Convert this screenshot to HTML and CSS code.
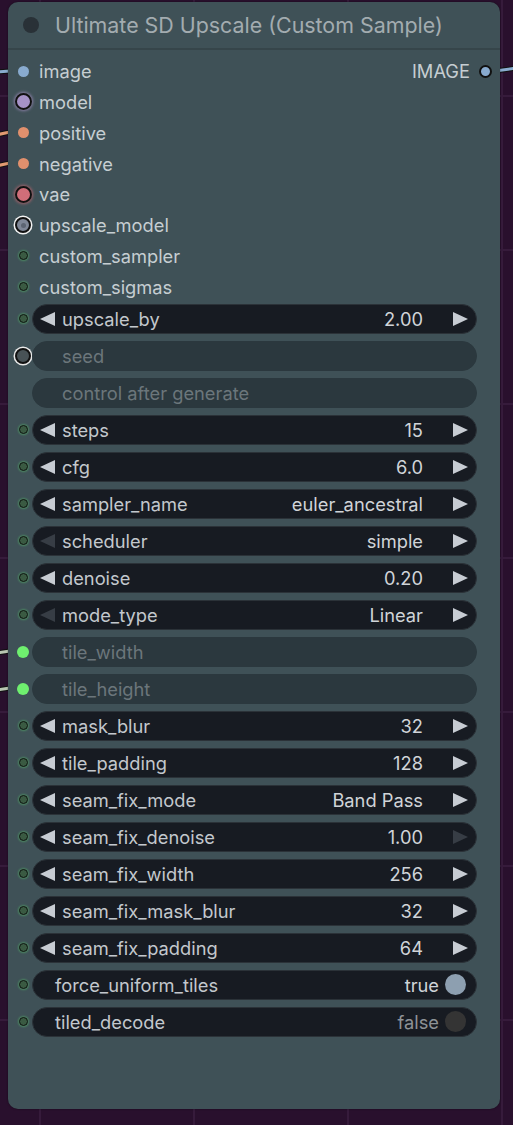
FILE: index.html
```html
<!DOCTYPE html>
<html>
<head>
<meta charset="utf-8">
<link rel="stylesheet" href="styles.css">
</head>
<body>
<svg class="links" width="513" height="1125" viewBox="0 0 513 1125">
  <g fill="none" stroke-linecap="round">
    <path d="M-4 72 L10 71" stroke="#111" stroke-width="5"/>
    <path d="M-4 72 L10 71" stroke="#8aaccf" stroke-width="3"/>
    <path d="M-4 135 L10 132" stroke="#111" stroke-width="5"/>
    <path d="M-4 135 L10 132" stroke="#e39a72" stroke-width="3"/>
    <path d="M-4 166 L10 163" stroke="#111" stroke-width="5"/>
    <path d="M-4 166 L10 163" stroke="#e39a72" stroke-width="3"/>
    <path d="M-4 653 L10 651" stroke="#111" stroke-width="5"/>
    <path d="M-4 653 L10 651" stroke="#b9c6b2" stroke-width="3"/>
    <path d="M-4 690 L10 688" stroke="#111" stroke-width="5"/>
    <path d="M-4 690 L10 688" stroke="#b9c6b2" stroke-width="3"/>
    <path d="M495 71 L517 68" stroke="#111" stroke-width="5"/>
    <path d="M495 71 L517 68" stroke="#8aaccf" stroke-width="3"/>
  </g>
</svg>
<div class="node">
  <div class="title"><span class="title-dot"></span><span class="title-text">Ultimate SD Upscale (Custom Sample)</span></div>
  <div class="io">
    <div class="row"><span class="slot"><span class="dot d-image"></span></span><span class="label">image</span>
      <span class="out"><span class="out-label">IMAGE</span><span class="dot d-out"></span></span></div>
    <div class="row"><span class="slot"><span class="dot d-model"></span></span><span class="label">model</span></div>
    <div class="row"><span class="slot"><span class="dot d-cond"></span></span><span class="label">positive</span></div>
    <div class="row"><span class="slot"><span class="dot d-cond"></span></span><span class="label">negative</span></div>
    <div class="row"><span class="slot"><span class="dot d-vae"></span></span><span class="label">vae</span></div>
    <div class="row"><span class="slot"><span class="dot d-up"><span class="d-up-in"></span></span></span><span class="label">upscale_model</span></div>
    <div class="row"><span class="slot"><span class="dot d-small"></span></span><span class="label">custom_sampler</span></div>
    <div class="row"><span class="slot"><span class="dot d-small"></span></span><span class="label">custom_sigmas</span></div>
  </div>
  <div class="widgets">
    <div class="wrow"><span class="slot"><span class="dot d-small"></span></span><div class="widget"><span class="al"></span><span class="wl">upscale_by</span><span class="wv">2.00</span><span class="ar"></span></div></div>
    <div class="wrow"><span class="slot"><span class="dot d-seed"></span></span><div class="widget off"><span class="wl">seed</span></div></div>
    <div class="wrow"><span class="slot"></span><div class="widget off"><span class="wl">control after generate</span></div></div>
    <div class="wrow"><span class="slot"><span class="dot d-small"></span></span><div class="widget"><span class="al"></span><span class="wl">steps</span><span class="wv">15</span><span class="ar"></span></div></div>
    <div class="wrow"><span class="slot"><span class="dot d-small"></span></span><div class="widget"><span class="al"></span><span class="wl">cfg</span><span class="wv">6.0</span><span class="ar"></span></div></div>
    <div class="wrow"><span class="slot"><span class="dot d-small"></span></span><div class="widget"><span class="al"></span><span class="wl">sampler_name</span><span class="wv">euler_ancestral</span><span class="ar"></span></div></div>
    <div class="wrow"><span class="slot"><span class="dot d-small"></span></span><div class="widget"><span class="al dim"></span><span class="wl">scheduler</span><span class="wv">simple</span><span class="ar"></span></div></div>
    <div class="wrow"><span class="slot"><span class="dot d-small"></span></span><div class="widget"><span class="al"></span><span class="wl">denoise</span><span class="wv">0.20</span><span class="ar"></span></div></div>
    <div class="wrow"><span class="slot"><span class="dot d-small"></span></span><div class="widget"><span class="al dim"></span><span class="wl">mode_type</span><span class="wv">Linear</span><span class="ar"></span></div></div>
    <div class="wrow"><span class="slot"><span class="dot d-int"></span></span><div class="widget off"><span class="wl">tile_width</span></div></div>
    <div class="wrow"><span class="slot"><span class="dot d-int"></span></span><div class="widget off"><span class="wl">tile_height</span></div></div>
    <div class="wrow"><span class="slot"><span class="dot d-small"></span></span><div class="widget"><span class="al"></span><span class="wl">mask_blur</span><span class="wv">32</span><span class="ar"></span></div></div>
    <div class="wrow"><span class="slot"><span class="dot d-small"></span></span><div class="widget"><span class="al"></span><span class="wl">tile_padding</span><span class="wv">128</span><span class="ar"></span></div></div>
    <div class="wrow"><span class="slot"><span class="dot d-small"></span></span><div class="widget"><span class="al"></span><span class="wl">seam_fix_mode</span><span class="wv">Band Pass</span><span class="ar"></span></div></div>
    <div class="wrow"><span class="slot"><span class="dot d-small"></span></span><div class="widget"><span class="al"></span><span class="wl">seam_fix_denoise</span><span class="wv">1.00</span><span class="ar dim"></span></div></div>
    <div class="wrow"><span class="slot"><span class="dot d-small"></span></span><div class="widget"><span class="al"></span><span class="wl">seam_fix_width</span><span class="wv">256</span><span class="ar"></span></div></div>
    <div class="wrow"><span class="slot"><span class="dot d-small"></span></span><div class="widget"><span class="al"></span><span class="wl">seam_fix_mask_blur</span><span class="wv">32</span><span class="ar"></span></div></div>
    <div class="wrow"><span class="slot"><span class="dot d-small"></span></span><div class="widget"><span class="al"></span><span class="wl">seam_fix_padding</span><span class="wv">64</span><span class="ar"></span></div></div>
    <div class="wrow"><span class="slot"><span class="dot d-small"></span></span><div class="widget toggle"><span class="wl">force_uniform_tiles</span><span class="wv">true</span><span class="knob on"></span></div></div>
    <div class="wrow"><span class="slot"><span class="dot d-small"></span></span><div class="widget toggle"><span class="wl">tiled_decode</span><span class="wv faint">false</span><span class="knob"></span></div></div>
  </div>
</div>
</body>
</html>
```
FILE: styles.css
```css
html, body {
  margin: 0;
  padding: 0;
}
body {
  width: 513px;
  height: 1125px;
  overflow: hidden;
  position: relative;
  background-color: #29102d;
  background-image:
    linear-gradient(to right, #361b3b 2px, transparent 2px),
    linear-gradient(to bottom, #361b3b 2px, transparent 2px);
  background-size: 154px 154px;
  background-position: 39px 95px;
  font-family: Inter, "Noto Sans", "DejaVu Sans", sans-serif;
}
.links {
  position: absolute;
  left: 0;
  top: 0;
  z-index: 0;
}
.node {
  position: relative;
  z-index: 1;
  margin: 2px 0 0 8px;
  width: 492px;
  height: 1107px;
  background: #3f5157;
  border-radius: 10px;
  box-shadow: 0 0 2px rgba(0, 0, 0, 0.5);
}
.title {
  height: 46px;
  border-bottom: 2px solid #36454a;
  display: flex;
  align-items: center;
  gap: 16px;
  padding-left: 15px;
}
.title-dot {
  width: 16px;
  height: 16px;
  border-radius: 50%;
  background: #293137;
  flex: none;
}
.title-text {
  font-size: 21.4px;
  color: #a3acb0;
  white-space: nowrap;
}
.io {
  padding-top: 5.8px;
}
.row {
  display: flex;
  align-items: center;
  height: 30.8px;
}
.slot {
  width: 16px;
  height: 16px;
  margin-left: 7px;
  flex: none;
  display: flex;
  align-items: center;
  justify-content: center;
}
.label {
  margin-left: 8px;
  font-size: 18.3px;
  color: #c6ced2;
}
.out {
  margin-left: auto;
  margin-right: 8px;
  display: flex;
  align-items: center;
  gap: 9px;
}
.out-label {
  font-size: 18.3px;
  color: #c6ced2;
}
.dot {
  display: block;
  border-radius: 50%;
  flex: none;
  box-sizing: border-box;
}
.d-image {
  width: 11px;
  height: 11px;
  background: #89abcf;
}
.d-out {
  width: 13px;
  height: 13px;
  background: #89abcf;
  border: 2px solid #111;
}
.d-model {
  width: 17px;
  height: 17px;
  background: #a692c7;
  border: 2px solid #111;
  box-shadow: 0 0 3px 1px rgba(190, 160, 220, 0.6);
}
.d-cond {
  width: 11px;
  height: 11px;
  background: #e1906d;
}
.d-vae {
  width: 17px;
  height: 17px;
  background: #d06e79;
  border: 2px solid #111;
  box-shadow: 0 0 3px 1px rgba(230, 110, 120, 0.6);
}
.d-up {
  width: 16px;
  height: 16px;
  background: #7e8696;
  border: 2px solid #111;
  box-shadow: 0 0 0 1.5px #f2f2f2;
  display: flex;
  align-items: center;
  justify-content: center;
}
.d-up-in {
  width: 5px;
  height: 5px;
  border-radius: 50%;
  background: #5c6472;
}
.d-seed {
  width: 16px;
  height: 16px;
  background: #485256;
  border: 2px solid #111;
  box-shadow: 0 0 0 1.5px #e8e8e8;
}
.d-small {
  width: 9px;
  height: 9px;
  background: #3a5a42;
  border: 1.5px solid #0e1410;
  box-shadow: 0 0 2px 1px rgba(90, 200, 110, 0.45);
}
.d-int {
  width: 12px;
  height: 12px;
  background: #6ff06f;
}
.widgets {
  margin-top: 1.8px;
  display: flex;
  flex-direction: column;
  gap: 7px;
}
.wrow {
  display: flex;
  align-items: center;
  height: 30px;
}
.widget {
  margin-left: 1px;
  width: 445px;
  height: 30px;
  box-sizing: border-box;
  border-radius: 15px;
  background: #171b22;
  border: 1px solid #2b3238;
  display: flex;
  align-items: center;
  padding: 0 8px 0 7px;
  font-size: 18.3px;
  white-space: nowrap;
}
.widget.off {
  background: #2b383e;
  border-color: #2b383e;
  padding-left: 29px;
}
.widget.off .wl {
  color: #6b767b;
  margin-left: 0;
}
.widget.toggle {
  padding-left: 22px;
  padding-right: 10px;
}
.widget.toggle .wl {
  margin-left: 0;
}
.al {
  width: 0;
  height: 0;
  border-top: 7.5px solid transparent;
  border-bottom: 7.5px solid transparent;
  border-right: 15px solid #c7ccd3;
  flex: none;
}
.ar {
  width: 0;
  height: 0;
  border-top: 7.5px solid transparent;
  border-bottom: 7.5px solid transparent;
  border-left: 15px solid #c7ccd3;
  margin-left: 30px;
  flex: none;
}
.al.dim {
  border-right-color: #373d45;
}
.ar.dim {
  border-left-color: #373d45;
}
.wl {
  margin-left: 7px;
  color: #c3c8cd;
}
.wv {
  margin-left: auto;
  color: #d0d4d8;
}
.wv.faint {
  color: #8d9296;
}
.knob {
  width: 21px;
  height: 21px;
  border-radius: 50%;
  background: #343434;
  margin-left: 6px;
  flex: none;
}
.knob.on {
  background: #8d9fb0;
}
```
